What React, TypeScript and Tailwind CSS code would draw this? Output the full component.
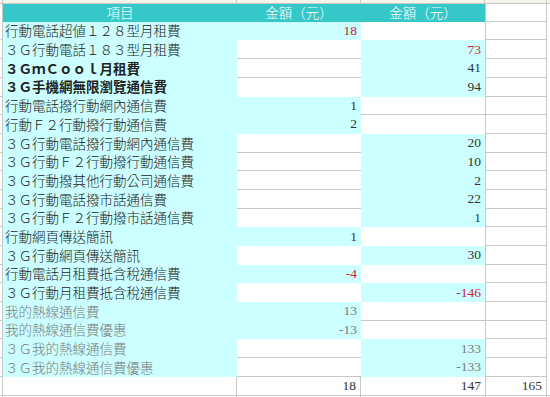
import { type ReactElement } from 'react';

type Col = 'b' | 'c';
type Tone = 'dark' | 'red' | 'gray';

type Row = {
    label: string;
    col: Col;
    value: string;
    tone: Tone;
    bold?: boolean;
    grayLabel?: boolean;
};

const rows: Row[] = [
    { label: '行動電話超値１２８型月租費', col: 'b', value: '18', tone: 'red' },
    { label: '３Ｇ行動電話１８３型月租費', col: 'c', value: '73', tone: 'red' },
    { label: '３ＧｍＣｏｏｌ月租費', col: 'c', value: '41', tone: 'dark', bold: true },
    { label: '３Ｇ手機網無限瀏覽通信費', col: 'c', value: '94', tone: 'dark', bold: true },
    { label: '行動電話撥行動網內通信費', col: 'b', value: '1', tone: 'dark' },
    { label: '行動Ｆ２行動撥行動通信費', col: 'b', value: '2', tone: 'dark' },
    { label: '３Ｇ行動電話撥行動網內通信費', col: 'c', value: '20', tone: 'dark' },
    { label: '３Ｇ行動Ｆ２行動撥行動通信費', col: 'c', value: '10', tone: 'dark' },
    { label: '３Ｇ行動撥其他行動公司通信費', col: 'c', value: '2', tone: 'dark' },
    { label: '３Ｇ行動電話撥市話通信費', col: 'c', value: '22', tone: 'dark' },
    { label: '３Ｇ行動Ｆ２行動撥市話通信費', col: 'c', value: '1', tone: 'dark' },
    { label: '行動網頁傳送簡訊', col: 'b', value: '1', tone: 'dark' },
    { label: '３Ｇ行動網頁傳送簡訊', col: 'c', value: '30', tone: 'dark' },
    { label: '行動電話月租費抵含稅通信費', col: 'b', value: '-4', tone: 'red' },
    { label: '３Ｇ行動月租費抵含稅通信費', col: 'c', value: '-146', tone: 'red' },
    { label: '我的熱線通信費', col: 'b', value: '13', tone: 'gray', grayLabel: true },
    { label: '我的熱線通信費優惠', col: 'b', value: '-13', tone: 'gray', grayLabel: true },
    { label: '３Ｇ我的熱線通信費', col: 'c', value: '133', tone: 'gray', grayLabel: true },
    { label: '３Ｇ我的熱線通信費優惠', col: 'c', value: '-133', tone: 'gray', grayLabel: true },
];

const toneClass: Record<Tone, string> = {
    dark: 'text-[#333333]',
    red: 'text-[#cc2233]',
    gray: 'text-[#7a7a7a]',
};

const cjk = "font-['Noto_Sans_CJK_TC','Noto_Sans_CJK_JP',sans-serif]";
const num = "font-['Liberation_Serif',serif] text-[13.5px]";

function NumCell({ filled, lineBelow, value, tone, width }: { filled: boolean; lineBelow: boolean; value?: string; tone?: Tone; width: string }): ReactElement {
    return (
        <div
            className={`${width} h-full flex items-center justify-end pr-[4px] ${num} ${tone ? toneClass[tone] : ''} ${
                filled ? 'bg-[#ccffff]' : 'bg-white'
            } ${lineBelow ? 'border-b border-[#c8c8c8]' : ''}`}
        >
            {value}
        </div>
    );
}

export default function App(): ReactElement {
    return (
        <div className="w-[550px] h-[397px] bg-white overflow-hidden flex flex-col">
            {/* strip of the row above */}
            <div className="h-[4px] flex shrink-0 border-b border-[#c8c8c8] bg-[#f6f3ea]">
                <div className="w-[3px] border-r border-[#c8c8c8]" />
                <div className="w-[234px] border-r border-[#c8c8c8]" />
                <div className="w-[124px] border-r border-[#c8c8c8]" />
                <div className="w-[124px] border-r border-[#c8c8c8]" />
                <div className="w-[62px] border-r border-[#c8c8c8]" />
            </div>

            {/* header */}
            <div className="h-[17.8px] flex shrink-0">
                <div className="w-[3px] border-r border-[#c8c8c8]" />
                <div className="w-[358px] flex bg-[#36c8c8] text-white text-[13.5px] leading-none font-light">
                    <div className={`w-[234px] flex items-center justify-center ${cjk}`}>項目</div>
                    <div className={`w-[124px] flex items-center justify-center ${cjk}`}>金額（元）</div>
                </div>
                <div className={`w-[124px] flex items-center justify-center bg-[#36c8c8] text-white text-[13.5px] leading-none font-light ${cjk}`}>
                    金額（元）
                </div>
                <div className="w-[62px] border-l border-r border-b border-[#c8c8c8]" />
            </div>

            {rows.map((r, i) => {
                const next = rows[i + 1];
                const bWhite = r.col !== 'b';
                const cWhite = r.col !== 'c';
                const bNextWhite = next ? next.col !== 'b' : true;
                const cNextWhite = next ? next.col !== 'c' : true;
                return (
                    <div key={i} className="h-[18.7px] flex shrink-0">
                        <div className="w-[3px] border-r border-b border-[#c8c8c8]" />
                        <div
                            className={`w-[234px] h-full flex items-center bg-[#ccffff] pl-[2px] text-[13.5px] leading-none whitespace-nowrap ${cjk} ${
                                r.grayLabel ? 'text-[#7a7a7a]' : 'text-[#222222]'
                            } ${r.bold ? 'font-bold' : 'font-light'}`}
                        >
                            {r.label}
                        </div>
                        <NumCell
                            width="w-[124px]"
                            filled={!bWhite}
                            lineBelow={bWhite && bNextWhite}
                            value={r.col === 'b' ? r.value : undefined}
                            tone={r.tone}
                        />
                        <NumCell
                            width="w-[124px]"
                            filled={!cWhite}
                            lineBelow={cWhite && cNextWhite}
                            value={r.col === 'c' ? r.value : undefined}
                            tone={r.tone}
                        />
                        <div className="w-[62px] border-l border-r border-b border-[#c8c8c8]" />
                    </div>
                );
            })}

            {/* totals */}
            <div className="h-[18.7px] flex shrink-0 border-b border-[#c8c8c8]">
                <div className="w-[3px] border-r border-[#c8c8c8]" />
                <div className="w-[234px] border-r border-[#c8c8c8]" />
                <div className={`w-[124px] flex items-center justify-end pr-[4px] border-r border-[#c8c8c8] text-[#333333] ${num}`}>18</div>
                <div className={`w-[124px] flex items-center justify-end pr-[4px] text-[#333333] ${num}`}>147</div>
                <div className={`w-[62px] flex items-center justify-end pr-[4px] border-l border-r border-[#c8c8c8] text-[#333333] ${num}`}>165</div>
            </div>
            <div className="flex-1 flex">
                <div className="w-[3px] border-r border-[#c8c8c8]" />
                <div className="w-[234px] border-r border-[#c8c8c8]" />
                <div className="w-[124px] border-r border-[#c8c8c8]" />
                <div className="w-[124px]" />
                <div className="w-[62px] border-l border-r border-[#c8c8c8]" />
            </div>
        </div>
    );
}
